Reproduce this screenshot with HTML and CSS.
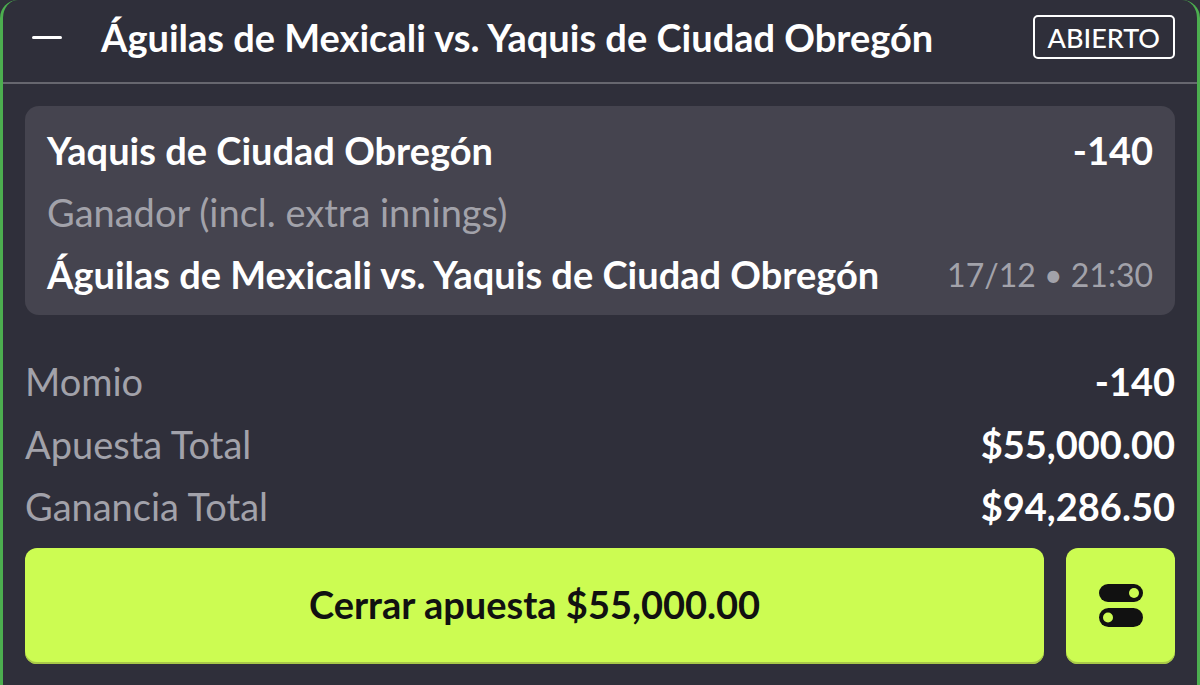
FILE: index.html
```html
<!DOCTYPE html>
<html lang="es">
  <head>
    <meta charset="UTF-8" />
    <meta name="viewport" content="width=device-width, initial-scale=1.0" />
    <title>Apuesta abierta</title>
    <link rel="stylesheet" href="styles.css">
  </head>
  <body>
    <div class="bet-card">
      <div class="bet-header">
        <span class="collapse-icon"></span>
        <h1 class="bet-title">Águilas de Mexicali vs. Yaquis de Ciudad Obregón</h1>
        <span class="status-badge">ABIERTO</span>
      </div>

      <div class="bet-body">
        <div class="selection">
          <div class="selection-row">
            <span class="selection-name">Yaquis de Ciudad Obregón</span>
            <span class="selection-odds">-140</span>
          </div>
          <div class="selection-row">
            <span class="market-name">Ganador (incl. extra innings)</span>
          </div>
          <div class="selection-row">
            <span class="event-name">Águilas de Mexicali vs. Yaquis de Ciudad Obregón</span>
            <span class="event-date">17/12 • 21:30</span>
          </div>
        </div>

        <div class="summary">
          <div class="summary-row">
            <span class="summary-label">Momio</span>
            <span class="summary-value">-140</span>
          </div>
          <div class="summary-row">
            <span class="summary-label">Apuesta Total</span>
            <span class="summary-value">$55,000.00</span>
          </div>
          <div class="summary-row">
            <span class="summary-label">Ganancia Total</span>
            <span class="summary-value">$94,286.50</span>
          </div>
        </div>

        <div class="actions">
          <button class="cashout-btn">Cerrar apuesta $55,000.00</button>
          <button class="options-btn" aria-label="Opciones">
            <!-- two toggle switches -->
            <svg width="44" height="43" viewBox="0 0 44 43">
              <rect x="0" y="0" width="44" height="18" rx="9" fill="#111" />
              <circle cx="35" cy="9" r="5" fill="#ccfc52" />
              <rect x="0" y="24" width="44" height="19" rx="9.5" fill="#111" />
              <circle cx="9" cy="33.5" r="5" fill="#ccfc52" />
            </svg>
          </button>
        </div>
      </div>
    </div>
  </body>
</html>
```

FILE: styles.css
```css
* {
  box-sizing: border-box;
}

body {
  margin: 0;
  font-family: Lato, "Open Sans", "Liberation Sans", sans-serif;
  background-color: #2f2f3a;
  color: #fff;
}

.bet-card {
  height: 685px;
  background-color: #2f2f3a;
  border-left: 3px solid #4cae4f;
  border-right: 3px solid #4cae4f;
  border-radius: 18px 18px 0 0;
}

.bet-header {
  display: flex;
  align-items: center;
  height: 84px;
  padding: 0 22px 8px 29px;
  border-bottom: 2px solid #67676f;
}

.collapse-icon {
  width: 30px;
  height: 3px;
  background-color: #fff;
  border-radius: 2px;
  margin-right: 39px;
}

.bet-title {
  flex: 1;
  margin: 0;
  font-size: 38px;
  font-weight: 700;
}

.status-badge {
  height: 44px;
  padding: 0 13px;
  display: flex;
  align-items: center;
  border: 2px solid #fff;
  border-radius: 5px;
  font-size: 27px;
  font-weight: 500;
}

.bet-body {
  padding: 22px 22px 0;
}

.selection {
  background-color: #45444f;
  border-radius: 14px;
  padding: 13px 22px 10px;
}

.selection-row {
  display: flex;
  justify-content: space-between;
  align-items: center;
  height: 62px;
}

.selection-name,
.selection-odds,
.event-name {
  font-size: 38px;
  font-weight: 700;
}

.market-name {
  font-size: 38px;
  color: #a2a2aa;
}

.event-date {
  font-size: 32px;
  color: #a2a2aa;
}

.summary {
  margin-top: 35px;
}

.summary-row {
  display: flex;
  justify-content: space-between;
  align-items: center;
  height: 62.5px;
}

.summary-label {
  font-size: 38px;
  color: #a2a2aa;
}

.summary-value {
  font-size: 38px;
  font-weight: 700;
}

.actions {
  display: flex;
  gap: 22px;
  margin-top: 10px;
  height: 116px;
}

.cashout-btn,
.options-btn {
  border: none;
  border-radius: 12px;
  background-color: #ccfc52;
  box-shadow: inset 0 -2px 0 #a9c948;
  color: #111;
  font-family: inherit;
}

.cashout-btn {
  flex: 1;
  padding-bottom: 5px;
  font-size: 38px;
  font-weight: 700;
}

.options-btn {
  width: 109px;
  display: flex;
  align-items: center;
  justify-content: center;
}
```
